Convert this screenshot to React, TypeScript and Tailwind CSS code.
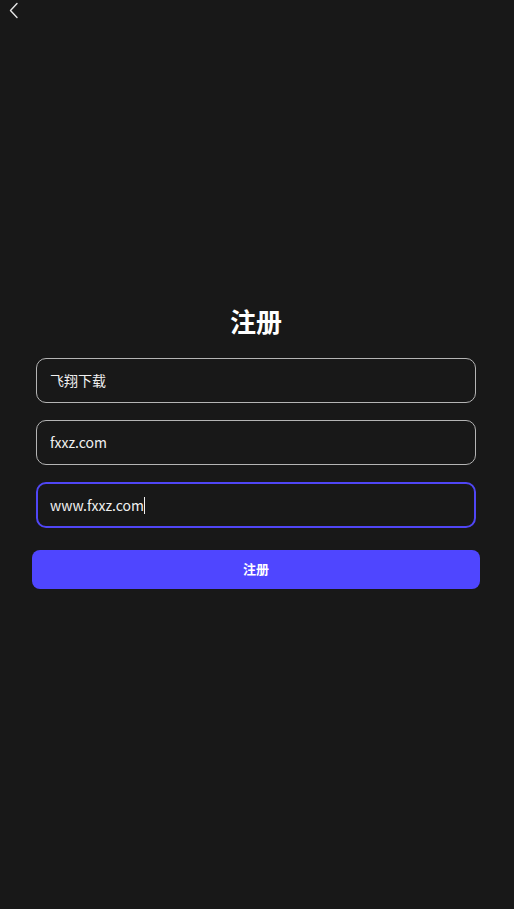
import { useState } from 'react';

export default function App() {
  const [name, setName] = useState('飞翔下载');
  const [pwd, setPwd] = useState('fxxz.com');
  const [site, setSite] = useState('www.fxxz.com');

  return (
    <div className="min-h-[909px] w-full bg-[#181818] text-white font-['Noto_Sans_CJK_SC','Noto_Sans',sans-serif]">
      <div className="w-[512px]">
        {/* top bar */}
        <div className="h-[20px] flex items-start">
          <button className="ml-[8px] mt-[2px] text-white">
            <svg width="12" height="17" viewBox="0 0 12 17" fill="none">
              <path d="M9 1.5 L2.5 8.5 L9 15.5" stroke="#e5e5e5" strokeWidth="1.4" strokeLinecap="round" strokeLinejoin="round" />
            </svg>
          </button>
        </div>

        <div className="pt-[284px] flex flex-col">
          <h1 className="text-center text-[26px] leading-[34px] font-bold mb-[20px]">注册</h1>

          <div className="px-[36px] flex flex-col gap-[17px]">
            <input
              value={name}
              onChange={e => setName(e.target.value)}
              className="h-[45px] w-full rounded-[10px] border border-[#b4b4b4] bg-transparent px-[13px] pb-[2px] text-[14px] text-[#f0f0f0] outline-none"
            />
            <input
              value={pwd}
              onChange={e => setPwd(e.target.value)}
              className="h-[45px] w-full rounded-[10px] border border-[#b4b4b4] bg-transparent px-[13px] pb-[2px] text-[14px] text-[#f0f0f0] outline-none"
            />
            <div className="h-[46px] w-full rounded-[10px] border-2 border-[#5046f5] flex items-center px-[12px] text-[14px] text-[#f0f0f0]">
              <span>{site}</span>
              <span className="w-px h-[17px] bg-[#f0f0f0]" />
            </div>
          </div>

          <div className="px-[32px] mt-[22px]">
            <button className="h-[39px] w-full rounded-[8px] bg-[#4f46ff] pb-[2px] text-[13px] font-bold text-white">
              注册
            </button>
          </div>
        </div>
      </div>
    </div>
  );
}
